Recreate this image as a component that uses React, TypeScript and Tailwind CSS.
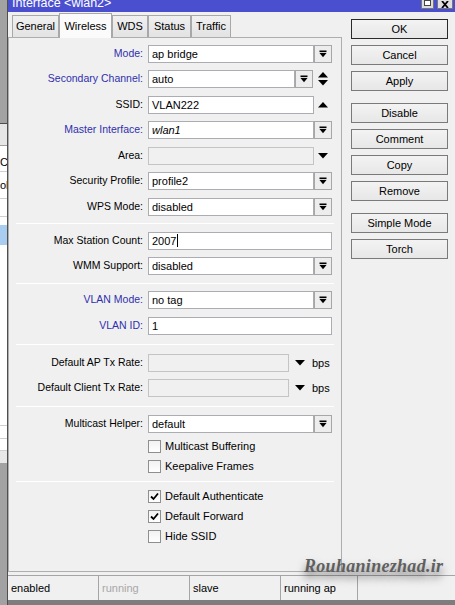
import React from "react";

const BLUE = "text-[#2f2fae]";

function DropIcon() {
  return (
    <svg width="8" height="8" viewBox="0 0 8 8">
      <rect x="0.5" y="0.5" width="7" height="1.6" fill="#000" />
      <polygon points="0.5,3 7.5,3 4,7.2" fill="#000" />
    </svg>
  );
}

function DownTri() {
  return (
    <svg width="10" height="6" viewBox="0 0 10 6">
      <polygon points="0,0 10,0 5,5.5" fill="#000" />
    </svg>
  );
}

function UpTri() {
  return (
    <svg width="10" height="6" viewBox="0 0 10 6">
      <polygon points="0,5.5 10,5.5 5,0" fill="#000" />
    </svg>
  );
}

function Row({ label, blue, children }: { label: string; blue?: boolean; children: React.ReactNode }) {
  return (
    <div className="flex items-center h-[25.5px]">
      <div className={`w-[139px] pr-[5px] text-right text-[10.5px] whitespace-nowrap ${blue ? BLUE : "text-black"}`}>
        {label}
      </div>
      {children}
    </div>
  );
}

function Field({ value, w, italic, disabled, caret }: { value?: string; w: string; italic?: boolean; disabled?: boolean; caret?: boolean }) {
  return (
    <div
      className={`${w} h-[18px] border flex items-center px-[3px] text-[11px] ${
        disabled ? "bg-[#f0f0f0] border-[#c4c4c4]" : "bg-white border-[#abadb3]"
      } ${italic ? "italic" : ""}`}
    >
      {value}
      {caret && <span className="inline-block w-[1px] h-[13px] bg-black ml-[1px]" />}
    </div>
  );
}

function DropBtn() {
  return (
    <div className="w-[18px] h-[18px] border border-[#a7a7a7] bg-[#ededed] flex items-center justify-center">
      <DropIcon />
    </div>
  );
}

function Sep({ h }: { h: string }) {
  return (
    <div className={`${h} flex items-center px-[7px]`}>
      <div className="w-full h-[1px] bg-[#d9d9d9] border-b border-white" />
    </div>
  );
}

function Check({ label, checked }: { label: string; checked?: boolean }) {
  return (
    <div className="flex items-center h-[20px] pl-[139px]">
      <div className="w-[13px] h-[13px] border border-[#8e8f8f] bg-linear-to-b from-[#f2f2f2] to-white flex items-center justify-center">
        {checked && (
          <svg width="9" height="9" viewBox="0 0 9 9">
            <path d="M1 4.5 L3.5 7 L8 1.5" stroke="#000" strokeWidth="1.8" fill="none" />
          </svg>
        )}
      </div>
      <span className="ml-[4px] text-[11px]">{label}</span>
    </div>
  );
}

function Btn({ label, first, mt }: { label: string; first?: boolean; mt?: string }) {
  return (
    <div
      className={`w-[97px] h-[20px] ${mt ?? "mt-[6px]"} flex items-center justify-center text-[11px] bg-linear-to-b from-[#f3f3f3] to-[#e7e7e7] border ${
        first ? "border-[#2a2a2a]" : "border-[#7a7a7a]"
      }`}
    >
      {label}
    </div>
  );
}

function Tab({ label, w, active }: { label: string; w: string; active?: boolean }) {
  return (
    <div
      className={`${w} flex items-center justify-center text-[11px] border border-[#a8a8a8] ${
        active
          ? "h-[25px] bg-[#fbfbfb] border-b-0 relative z-10 -mb-[1px]"
          : "h-[22px] bg-linear-to-b from-[#f0f0f0] to-[#e3e3e3] border-b-0"
      }`}
    >
      {label}
    </div>
  );
}

function LeftStrip() {
  return (
    <div className="w-[7px] shrink-0 flex flex-col overflow-hidden text-[11px]">
      <div className="h-[123px] bg-[#a2a2a2]" />
      <div className="h-[1px] bg-[#4d4d4d]" />
      <div className="h-[22px] bg-[#e6e6e6] border-b border-[#a0a0a0]" />
      <div className="h-[317px] bg-white flex flex-col">
        <div className="h-[26px] border-b border-[#cfcfcf] flex items-end whitespace-nowrap leading-[14px] pb-[2px]">Co</div>
        <div className="h-[27px] border-b border-[#cfcfcf] flex items-center whitespace-nowrap">ol</div>
        <div className="h-[18px] border-b border-[#cfcfcf]" />
        <div className="h-[8px]" />
        <div className="h-[20px] bg-[#a9cdf0]" />
        <div className="flex-1" />
        <div className="h-[13px] border-t border-[#d0d0d0]" />
        <div className="h-[12px] border-t border-[#d0d0d0]" />
        <div className="h-[13px] border-t border-[#d0d0d0] bg-[#e8e8e8]" />
      </div>
      <div className="flex-1 bg-[#a2a2a2]" />
    </div>
  );
}

export default function App() {
  return (
    <div className="relative w-[455px] h-[605px] flex overflow-hidden font-['Liberation_Sans',Arial,sans-serif] text-black select-none">
      <LeftStrip />

      <div className="flex-1 flex flex-col border-l border-[#4f4f4f] bg-[#f0f0f0]">
        {/* title bar */}
        <div className="h-[12px] bg-[#4a4fd0] flex items-start overflow-hidden">
          <span className="ml-[4px] -mt-[5px] text-[12.5px] text-white leading-[16px]">Interface &lt;wlan2&gt;</span>
          <div className="ml-auto flex gap-[3px] mr-[2px]">
            <div className="w-[13px] h-[9px] bg-[#dcdcdc] border border-[#777] border-t-0 flex items-start justify-center">
              <div className="w-[7px] h-[6px] border border-[#444] bg-white" />
            </div>
            <div className="w-[16px] h-[9px] bg-[#e0e0e0] border border-[#777] border-t-0 flex items-center justify-center">
              <svg width="8" height="7" viewBox="0 0 8 7">
                <path d="M1 0 L7 7 M7 0 L1 7" stroke="#000" strokeWidth="1.8" />
              </svg>
            </div>
          </div>
        </div>

        <div className="flex-1 flex">
          {/* left column: tabs + panel */}
          <div className="w-[334px] flex flex-col pb-[3px]">
            <div className="h-[25px] flex items-end pl-[4px]">
              <Tab label="General" w="w-[47px]" />
              <Tab label="Wireless" w="w-[53px]" active />
              <Tab label="WDS" w="w-[36px]" />
              <Tab label="Status" w="w-[43px]" />
              <Tab label="Traffic" w="w-[40px]" />
            </div>
            <div className="flex-1 border border-[#aeaeae] bg-[#f0f0f0] pt-[3px]">
              <Row label="Mode:" blue>
                <Field value="ap bridge" w="w-[166px]" />
                <DropBtn />
              </Row>
              <Row label="Secondary Channel:" blue>
                <Field value="auto" w="w-[147px]" />
                <DropBtn />
                <div className="ml-[5px] flex flex-col gap-[2px]">
                  <UpTri />
                  <DownTri />
                </div>
              </Row>
              <Row label="SSID:">
                <Field value="VLAN222" w="w-[166px]" />
                <div className="ml-[4px]">
                  <UpTri />
                </div>
              </Row>
              <Row label="Master Interface:" blue>
                <Field value="wlan1" w="w-[166px]" italic />
                <DropBtn />
              </Row>
              <Row label="Area:">
                <Field w="w-[166px]" disabled />
                <div className="ml-[4px]">
                  <DownTri />
                </div>
              </Row>
              <Row label="Security Profile:">
                <Field value="profile2" w="w-[166px]" />
                <DropBtn />
              </Row>
              <Row label="WPS Mode:">
                <Field value="disabled" w="w-[166px]" />
                <DropBtn />
              </Row>
              <Sep h="h-[8.5px]" />
              <Row label="Max Station Count:">
                <Field value="2007" w="w-[184px]" caret />
              </Row>
              <Row label="WMM Support:">
                <Field value="disabled" w="w-[166px]" />
                <DropBtn />
              </Row>
              <Sep h="h-[8.5px]" />
              <Row label="VLAN Mode:" blue>
                <Field value="no tag" w="w-[166px]" />
                <DropBtn />
              </Row>
              <Row label="VLAN ID:" blue>
                <Field value="1" w="w-[184px]" />
              </Row>
              <Sep h="h-[11.5px]" />
              <Row label="Default AP Tx Rate:">
                <Field w="w-[141px]" disabled />
                <div className="ml-[6px]">
                  <DownTri />
                </div>
                <span className="ml-[7px] text-[11px]">bps</span>
              </Row>
              <Row label="Default Client Tx Rate:">
                <Field w="w-[141px]" disabled />
                <div className="ml-[6px]">
                  <DownTri />
                </div>
                <span className="ml-[7px] text-[11px]">bps</span>
              </Row>
              <Sep h="h-[10px]" />
              <Row label="Multicast Helper:">
                <Field value="default" w="w-[166px]" />
                <DropBtn />
              </Row>
              <Check label="Multicast Buffering" />
              <Check label="Keepalive Frames" />
              <Sep h="h-[10px]" />
              <Check label="Default Authenticate" checked />
              <Check label="Default Forward" checked />
              <Check label="Hide SSID" />
            </div>
          </div>

          {/* right column: buttons */}
          <div className="pl-[9px] pt-[1px] flex flex-col">
            <Btn label="OK" first />
            <Btn label="Cancel" />
            <Btn label="Apply" />
            <Btn label="Disable" mt="mt-[12px]" />
            <Btn label="Comment" />
            <Btn label="Copy" />
            <Btn label="Remove" />
            <Btn label="Simple Mode" mt="mt-[12px]" />
            <Btn label="Torch" />
          </div>
        </div>

        {/* status bar */}
        <div className="h-[25px] flex border-t border-[#a5a5a5] text-[11px]">
          <div className="w-[91px] border-r border-[#a5a5a5] flex items-center pl-[3px]">enabled</div>
          <div className="w-[91px] border-r border-[#a5a5a5] flex items-center pl-[3px] text-[#a8a8a8]">running</div>
          <div className="w-[91px] border-r border-[#a5a5a5] flex items-center pl-[3px]">slave</div>
          <div className="w-[77px] border-r border-[#a5a5a5] flex items-center pl-[3px]">running ap</div>
          <div className="flex-1" />
        </div>
        <div className="h-[5px] bg-[#7d7d7d]" />
      </div>

      {/* watermark */}
      <div className="absolute left-[304px] top-[553px] font-['Liberation_Serif',serif] italic font-bold text-[18px] text-[#5f5f5f] tracking-[0.3px] [text-shadow:0_6px_8px_rgba(0,0,0,0.55)]">
        Rouhaninezhad.ir
      </div>
    </div>
  );
}
